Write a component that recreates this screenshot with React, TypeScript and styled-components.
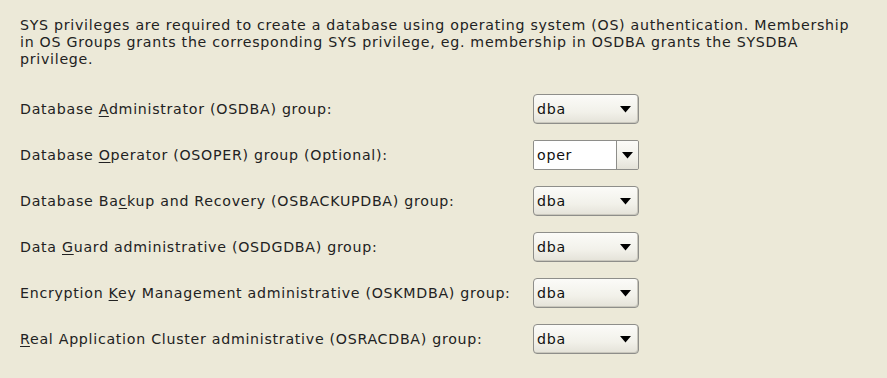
import React from "react";
import styled, { createGlobalStyle } from "styled-components";

const Global = createGlobalStyle`
  html, body { margin: 0; padding: 0; background: #ece9d8; }
  body { font-family: "DejaVu Sans", "Liberation Sans", sans-serif; }
`;

const Page = styled.div`
  width: 887px;
  height: 378px;
  box-sizing: border-box;
  padding: 17px 20px 0 20px;
  background: #ece9d8;
  color: #222;
  font-size: 14.2px;
  letter-spacing: 0.72px;
`;

const Intro = styled.p`
  margin: 0 0 26px 0;
  line-height: 17px;
  white-space: nowrap;
`;

const Rows = styled.div`
  display: flex;
  flex-direction: column;
  gap: 16px;
`;

const Row = styled.div`
  display: flex;
  align-items: center;
  height: 30px;
`;

const Label = styled.div`
  width: 513px;
  flex: none;
  white-space: nowrap;
`;

const U = styled.span`
  text-decoration: underline;
  text-underline-offset: 2px;
`;

const Combo = styled.div<{ $editable?: boolean }>`
  width: 106px;
  height: 30px;
  box-sizing: border-box;
  display: flex;
  align-items: center;
  border: 1px solid #8e8e8a;
  border-radius: ${(p) => (p.$editable ? "2px" : "4px")};
  background: ${(p) =>
    p.$editable ? "transparent" : "linear-gradient(#fbfbf8, #f2f1ea 60%, #e4e2d8)"};
  box-shadow: ${(p) => (p.$editable ? "none" : "inset -1px -1px 0 #c9c7bd")};
  overflow: hidden;
`;

const Value = styled.div<{ $editable?: boolean }>`
  flex: 1;
  height: 100%;
  display: flex;
  align-items: center;
  padding-left: 3px;
  background: ${(p) => (p.$editable ? "#ffffff" : "transparent")};
  border-right: ${(p) => (p.$editable ? "1px solid #8e8e8a" : "none")};
  color: #111;
`;

const ArrowBox = styled.div<{ $editable?: boolean }>`
  width: ${(p) => (p.$editable ? "21px" : "26px")};
  height: 100%;
  display: flex;
  align-items: center;
  justify-content: center;
  background: ${(p) =>
    p.$editable ? "linear-gradient(#fbfbf8, #f2f1ea 60%, #e4e2d8)" : "transparent"};
`;

const Arrow = () => (
  <svg width="11" height="7" viewBox="0 0 11 7">
    <polygon points="0,0 11,0 5.5,6.5" fill="#000" />
  </svg>
);

type Item = { pre: string; u: string; post: string; value: string; editable?: boolean };

const items: Item[] = [
  { pre: "Database ", u: "A", post: "dministrator (OSDBA) group:", value: "dba" },
  { pre: "Database ", u: "O", post: "perator (OSOPER) group (Optional):", value: "oper", editable: true },
  { pre: "Database Ba", u: "c", post: "kup and Recovery (OSBACKUPDBA) group:", value: "dba" },
  { pre: "Data ", u: "G", post: "uard administrative (OSDGDBA) group:", value: "dba" },
  { pre: "Encryption ", u: "K", post: "ey Management administrative (OSKMDBA) group:", value: "dba" },
  { pre: "", u: "R", post: "eal Application Cluster administrative (OSRACDBA) group:", value: "dba" },
];

export default function App() {
  return (
    <>
      <Global />
      <Page>
        <Intro>
          SYS privileges are required to create a database using operating system (OS) authentication. Membership
          <br />
          in OS Groups grants the corresponding SYS privilege, eg. membership in OSDBA grants the SYSDBA
          <br />
          privilege.
        </Intro>
        <Rows>
          {items.map((it, i) => (
            <Row key={i}>
              <Label>
                {it.pre}
                <U>{it.u}</U>
                {it.post}
              </Label>
              <Combo $editable={it.editable}>
                <Value $editable={it.editable}>{it.value}</Value>
                <ArrowBox $editable={it.editable}>
                  <Arrow />
                </ArrowBox>
              </Combo>
            </Row>
          ))}
        </Rows>
      </Page>
    </>
  );
}
